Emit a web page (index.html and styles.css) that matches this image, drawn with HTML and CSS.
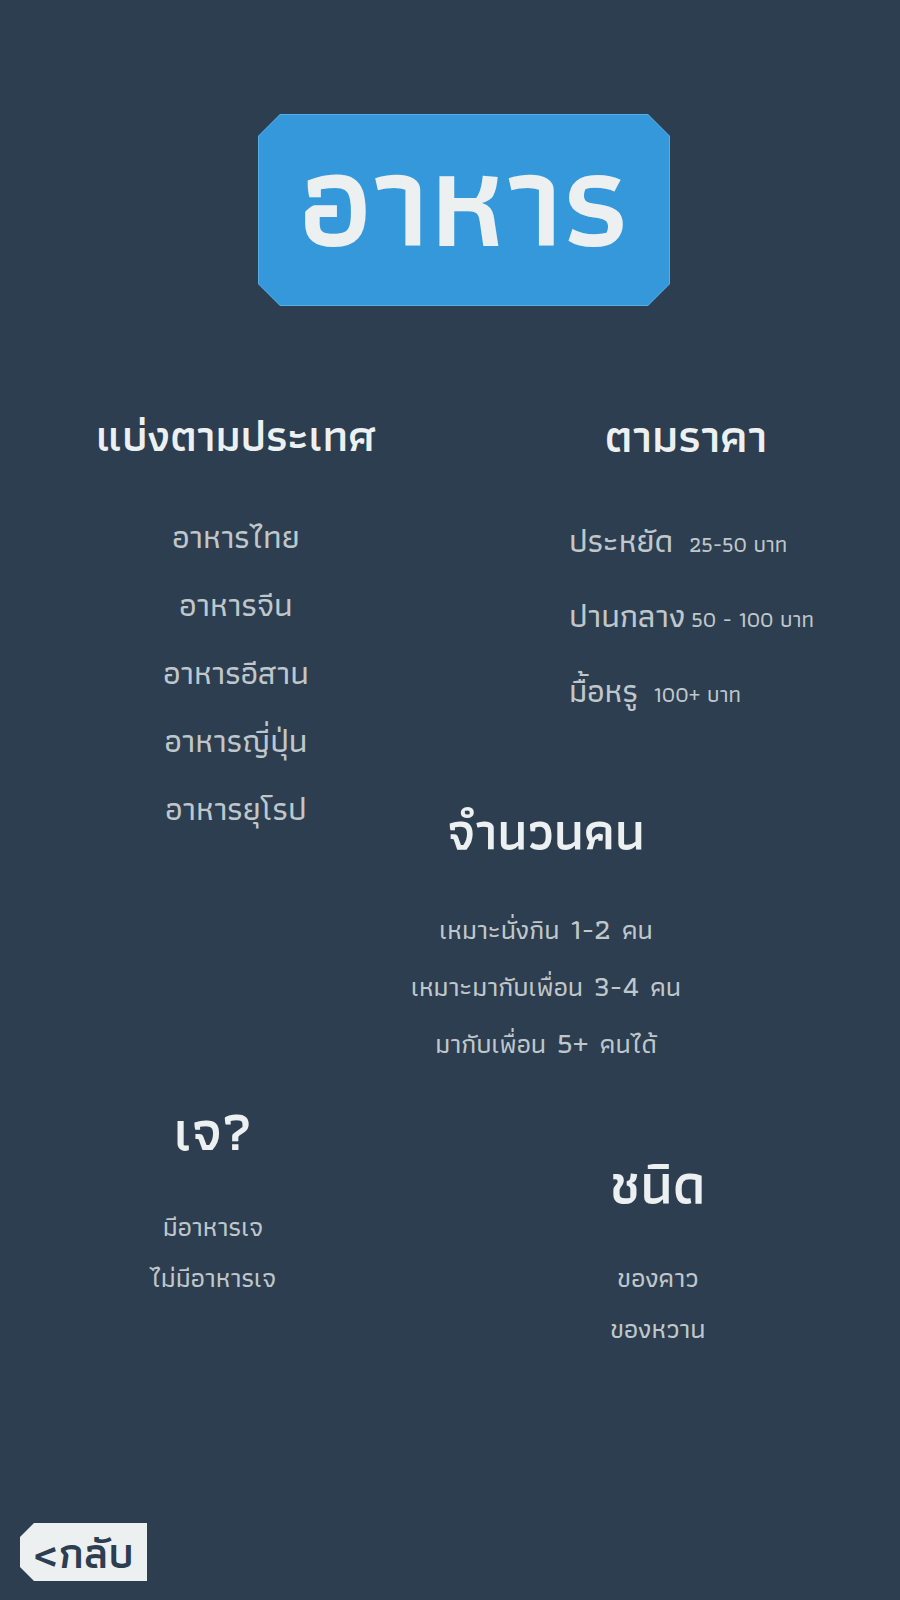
FILE: index.html
```html
<!DOCTYPE html>
<html lang="th">
<head>
<meta charset="utf-8">
<title>อาหาร</title>
<link rel="stylesheet" href="styles.css">
</head>
<body>
<div class="page">
  <header class="masthead">
    <div class="title-frame">
      <h1 class="title">อาหาร</h1>
    </div>
  </header>

  <main class="grid">
    <section class="block country">
      <h2 class="heading">แบ่งตามประเทศ</h2>
      <ul class="list">
        <li>อาหารไทย</li>
        <li>อาหารจีน</li>
        <li>อาหารอีสาน</li>
        <li>อาหารญี่ปุ่น</li>
        <li>อาหารยุโรป</li>
      </ul>
    </section>

    <div class="right">
      <section class="block price">
        <h2 class="heading">ตามราคา</h2>
        <ul class="list price-list">
          <li>ประหยัด <span class="small">25-50 บาท</span></li>
          <li>ปานกลาง<span class="small">50 - 100 บาท</span></li>
          <li>มื้อหรู <span class="small">100+ บาท</span></li>
        </ul>
      </section>

      <section class="block people">
        <h2 class="heading">จำนวนคน</h2>
        <ul class="list people-list">
          <li>เหมาะนั่งกิน <span class="num">1-2</span> คน</li>
          <li>เหมาะมากับเพื่อน <span class="num">3-4</span> คน</li>
          <li>มากับเพื่อน <span class="num">5+</span> คนได้</li>
        </ul>
      </section>
    </div>

    <section class="block veg">
      <h2 class="heading">เจ?</h2>
      <ul class="list small-list">
        <li>มีอาหารเจ</li>
        <li>ไม่มีอาหารเจ</li>
      </ul>
    </section>

    <section class="block kind">
      <h2 class="heading">ชนิด</h2>
      <ul class="list small-list">
        <li>ของคาว</li>
        <li>ของหวาน</li>
      </ul>
    </section>
  </main>

  <footer class="foot">
    <a class="back" href="#">&lt;กลับ</a>
  </footer>
</div>
</body>
</html>
```
FILE: styles.css
```css
html, body {
  margin: 0;
  padding: 0;
  background: #2c3e50;
}
body {
  font-family: Athiti, Kanit, "Noto Sans Thai", sans-serif;
  color: #ecf0f1;
  width: 900px;
  height: 1600px;
  overflow: hidden;
}
.page {
  display: flex;
  flex-direction: column;
  height: 1600px;
}
.masthead {
  padding-top: 114px;
  padding-left: 258px;
}
.title-frame {
  width: 412px;
  height: 192px;
  padding: 1px;
  box-sizing: border-box;
  background: #55aee6;
  clip-path: polygon(22px 0, calc(100% - 22px) 0, 100% 22px, 100% calc(100% - 22px), calc(100% - 22px) 100%, 22px 100%, 0 calc(100% - 22px), 0 22px);
}
.title {
  margin: 0;
  height: 100%;
  box-sizing: border-box;
  padding-bottom: 22px;
  background: #3498db;
  clip-path: polygon(21px 0, calc(100% - 21px) 0, 100% 21px, 100% calc(100% - 21px), calc(100% - 21px) 100%, 21px 100%, 0 calc(100% - 21px), 0 21px);
  display: flex;
  align-items: center;
  justify-content: center;
  font-size: 135px;
  font-weight: 600;
  line-height: 1;
  color: #ecf0f1;
}
.grid {
  display: grid;
  grid-template-columns: 472px 1fr;
  padding-top: 95px;
}
.block {
  text-align: center;
}
.heading {
  margin: 0;
  font-size: 52px;
  font-weight: 600;
  line-height: 70px;
  color: #ecf0f1;
}
.country .heading {
  font-size: 44px;
}
.price .heading {
  font-size: 46px;
}
.veg .heading,
.kind .heading {
  font-size: 56px;
}
.list {
  list-style: none;
  margin: 0;
  padding: 0;
  color: #c0c7cb;
  font-weight: 500;
}
.country .list {
  margin-top: 32px;
  font-size: 33px;
  line-height: 68px;
}
.right {
  display: flex;
  flex-direction: column;
}
.price-list {
  text-align: left;
  padding-left: 97px;
  margin-top: 34px;
  font-size: 33px;
  line-height: 71px;
}
.small {
  font-size: 22px;
  margin-left: 6px;
}
.people {
  margin-left: -126px;
  width: 400px;
  margin-top: 66px;
}
.people-list {
  margin-top: 35px;
  font-size: 27px;
  line-height: 56px;
}
.num {
  font-size: 30px;
  margin: 0 3px;
}
.veg {
  padding-top: 24px;
  width: 426px;
}
.kind {
  padding-top: 77px;
  width: 372px;
}
.small-list {
  margin-top: 35px;
  font-size: 27px;
  line-height: 51px;
}
.kind .small-list {
  margin-top: 33px;
}
.foot {
  margin-top: auto;
  padding: 0 0 19px 20px;
}
.back {
  display: inline-flex;
  align-items: center;
  justify-content: center;
  width: 127px;
  height: 58px;
  background: #ecf0f1;
  color: #2c3e50;
  text-decoration: none;
  font-size: 44px;
  font-weight: 600;
  clip-path: polygon(14px 0, 100% 0, 100% 100%, 14px 100%, 0 calc(100% - 14px), 0 14px);
}
```
